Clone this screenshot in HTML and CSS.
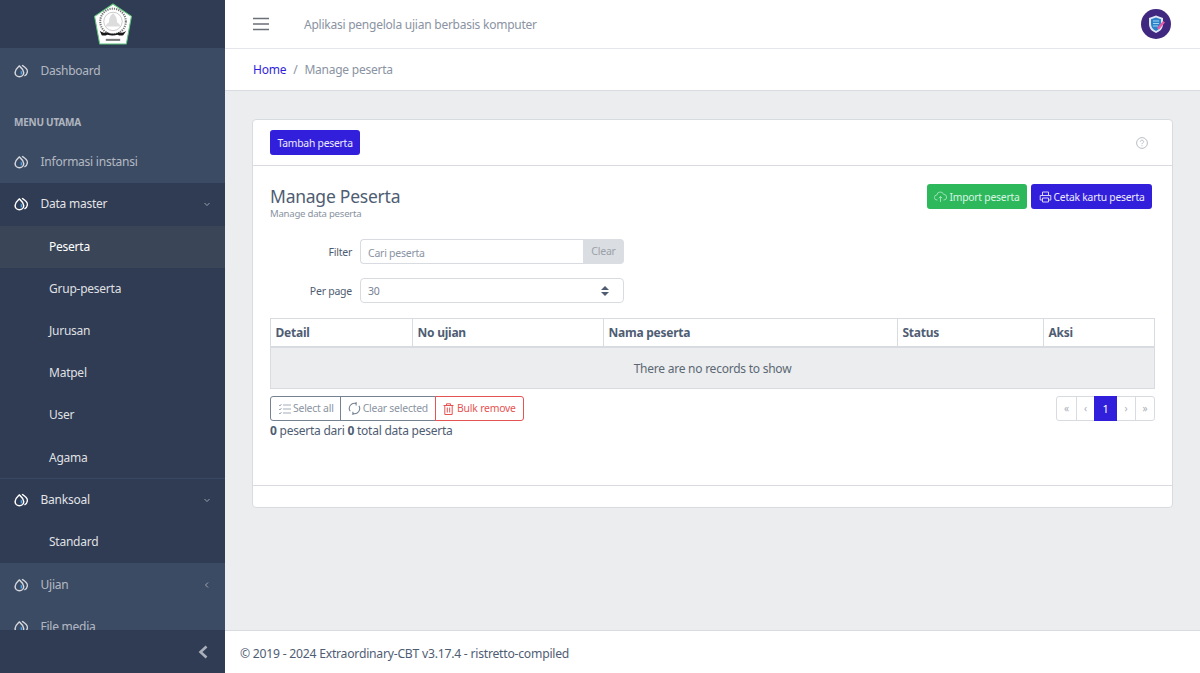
FILE: index.html
```html
<!DOCTYPE html>
<html lang="id">
<head>
<meta charset="utf-8">
<title>Manage peserta</title>
<link rel="stylesheet" href="styles.css">
</head>
<body>
<svg class="defs" width="0" height="0" aria-hidden="true">
  <symbol id="drop" viewBox="0 0 14 14">
    <path d="M8 1.200c2.400 1.700 5.400 3.300 5.400 6.100 0 2.200-1.200 3.800-3 4.500" fill="none" stroke="currentColor" stroke-width="1.300"/>
    <path d="M5.300 2C7 3.600 9.700 5.200 9.700 8.500a4.300 4.300 0 0 1-8.600 0C1.100 5.200 3.600 3.600 5.300 2Z" fill="none" stroke="currentColor" stroke-width="1.500"/>
    <path d="M6.700 6.200c.9.900 1.500 1.700 1.500 2.700 0 1-.7 1.700-1.500 1.700Z" fill="#4aa3ef"/>
  </symbol>
</svg>
<div class="app">
  <aside class="sidebar">
    <div class="brand">
      <svg class="logo" width="40" height="42" viewBox="1 0 38 41">
        <path d="M20 1 38 13 33 40 7 40 2 13Z" fill="#fff" stroke="#5cc47a" stroke-width="1" stroke-linejoin="round"/>
        <circle cx="20" cy="18" r="12.500" fill="none" stroke="#777" stroke-width="2" stroke-dasharray="1.200 1"/>
        <circle cx="20" cy="18" r="9" fill="none" stroke="#aaa" stroke-width=".6"/>
        <path d="M20 10c2.500 2 4 5 4 9 2 1 3 2 3 4H13c0-2 1-3 3-4 0-4 1.500-7 4-9Z" fill="#dcdcdc"/>
        <path d="M7 27c3 2 5 2.500 7 1.500 4 2 8 2 12 0 2 1 4 .5 7-1.500l-3 4.500c-2 .5-3.500.5-5.500-.5-3 1-7 1-10 0-2 1-3.500 1-5.500.500Z" fill="#1a1a1a"/>
        <rect x="13" y="35" width="14" height="2" fill="#777"/>
      </svg>
    </div>
    <nav class="nav">
      <a class="nav-link"><svg class="ico"><use href="#drop"/></svg>Dashboard</a>
      <div class="nav-title">MENU UTAMA</div>
      <a class="nav-link"><svg class="ico"><use href="#drop"/></svg>Informasi instansi</a>
      <div class="group">
        <a class="nav-link"><svg class="ico"><use href="#drop"/></svg>Data master<svg class="chev" viewBox="0 0 8 8"><path d="M1.500 3 4 5.500 6.500 3"/></svg></a>
        <a class="sub active">Peserta</a>
        <a class="sub">Grup-peserta</a>
        <a class="sub">Jurusan</a>
        <a class="sub">Matpel</a>
        <a class="sub">User</a>
        <a class="sub">Agama</a>
      </div>
      <div class="group sep">
        <a class="nav-link"><svg class="ico"><use href="#drop"/></svg>Banksoal<svg class="chev" viewBox="0 0 8 8"><path d="M1.500 3 4 5.500 6.500 3"/></svg></a>
        <a class="sub">Standard</a>
      </div>
      <a class="nav-link"><svg class="ico"><use href="#drop"/></svg>Ujian<svg class="chev" viewBox="0 0 8 8"><path d="M5 1.500 2.500 4 5 6.500"/></svg></a>
      <a class="nav-link"><svg class="ico"><use href="#drop"/></svg>File media</a>
    </nav>
    <div class="minimizer">
      <svg width="12" height="14" viewBox="0 0 12 14"><path d="M9.500 1.500 3.500 7l6 5.500" fill="none" stroke="#a9b0bb" stroke-width="2.600"/></svg>
    </div>
  </aside>
  <div class="wrapper">
    <header class="header">
      <div class="topbar">
        <svg class="burger" width="16" height="14" viewBox="0 0 16 14"><path d="M0 1.500h16M0 7h16M0 12.500h16" stroke="#6b7078" stroke-width="1.300"/></svg>
        <span class="tagline">Aplikasi pengelola ujian berbasis komputer</span>
        <svg class="avatar" width="30" height="30" viewBox="0 0 30 30">
          <circle cx="15" cy="15" r="15" fill="#40277f"/>
          <path d="M15 6.500 22 9v6c0 4.500-3 7.500-7 9-4-1.500-7-4.500-7-9V9Z" fill="#dfe6f3"/>
          <path d="M15 8.500 20 10.300V15c0 3.300-2 5.500-5 7-3-1.500-5-3.700-5-7v-4.700Z" fill="#2b82c9"/>
          <path d="M12 12h6M12 14.500h6M12 17h5" stroke="#9fd6f2" stroke-width="1"/>
          <path d="M16 19l6-7 2 1.500-6 7Z" fill="#e85aa5"/>
        </svg>
      </div>
      <div class="crumbs">
        <a class="crumb-link">Home</a><span class="crumb-sep">/</span><span class="crumb-now">Manage peserta</span>
      </div>
    </header>
    <main class="main">
      <section class="card">
        <div class="card-head">
          <button class="btn primary">Tambah peserta</button>
          <svg class="help" width="12" height="12" viewBox="0 0 12 12"><circle cx="6" cy="6" r="5.400" fill="none" stroke="#a7adb5" stroke-width=".8"/><path d="M4.400 4.700C4.400 3.700 5.100 3.200 6 3.200s1.600.6 1.600 1.400C7.600 5.800 6 5.800 6 7.200" fill="none" stroke="#a7adb5" stroke-width=".8"/><circle cx="6" cy="8.800" r=".5" fill="#a7adb5"/></svg>
        </div>
        <div class="card-body">
          <div class="title-row">
            <div>
              <h4 class="title">Manage Peserta</h4>
              <div class="subtitle">Manage data peserta</div>
            </div>
            <div class="actions">
              <button class="btn success"><svg width="13" height="12" viewBox="0 0 13 12"><path d="M3.500 9H3A2.500 2.500 0 0 1 2.800 4 3.500 3.500 0 0 1 9.600 3.400 2.800 2.800 0 0 1 10 9h-.5M6.500 11V5.500M4.800 7.200l1.700-1.700 1.700 1.700" fill="none" stroke="#a5e5bd" stroke-width=".9"/></svg>Import peserta</button>
              <button class="btn primary"><svg width="13" height="12" viewBox="0 0 13 12"><path d="M3.500 4V1h6v3M3 9H1.200V4.500h10.600V9H10M3.500 7h6v4h-6Z" fill="none" stroke="#d8d4fa" stroke-width="1"/></svg>Cetak kartu peserta</button>
            </div>
          </div>
          <div class="form-row first">
            <label class="label">Filter</label>
            <div class="input-group">
              <span class="input placeholder">Cari peserta</span>
              <span class="clear">Clear</span>
            </div>
          </div>
          <div class="form-row second">
            <label class="label">Per page</label>
            <div class="select">
              <span class="select-value">30</span>
              <svg width="8" height="10" viewBox="0 0 8 10"><path d="M4 0 8 4H0ZM4 10 0 6h8Z" fill="#4f5d73"/></svg>
            </div>
          </div>
          <table class="table">
            <thead>
              <tr><th class="c1">Detail</th><th class="c2">No ujian</th><th class="c3">Nama peserta</th><th class="c4">Status</th><th class="c5">Aksi</th></tr>
            </thead>
            <tbody>
              <tr><td colspan="5">There are no records to show</td></tr>
            </tbody>
          </table>
          <div class="tools">
            <div class="btn-group">
              <button class="tbtn dark"><svg width="13" height="12" viewBox="0 0 13 12"><path d="M5 2h8M5 6h8M5 10h8M1 2l1 1 1.500-2M1 6l1 1 1.500-2M1 10l1 1 1.500-2" fill="none" stroke="#9aa3b2" stroke-width=".9"/></svg>Select all</button>
              <button class="tbtn dark joined"><svg width="13" height="13" viewBox="0 0 12 12"><path d="M2 8.500A4.700 4.700 0 0 1 7.500 1.500M10 3.500A4.700 4.700 0 0 1 4.500 10.500M7.500 0v3.200M4.500 9v3" fill="none" stroke="#768192" stroke-width="1"/></svg>Clear selected</button>
              <button class="tbtn danger joined"><svg width="11" height="12" viewBox="0 0 11 12"><path d="M.5 2.500h10M3.500 2.500V.8h4v1.700M1.800 2.500v9h7.400v-9M4.300 4.500v5M6.700 4.500v5" fill="none" stroke="#e55353" stroke-width="1"/></svg>Bulk remove</button>
            </div>
            <ul class="pager">
              <li class="pg-first">«</li><li class="pg-prev">‹</li><li class="current">1</li><li class="pg-next">›</li><li class="pg-last">»</li>
            </ul>
          </div>
          <p class="summary"><b>0</b> peserta dari <b>0</b> total data peserta</p>
        </div>
        <div class="card-foot"></div>
      </section>
    </main>
    <footer class="footer">© 2019 - 2024 Extraordinary-CBT v3.17.4 - ristretto-compiled</footer>
  </div>
</div>
</body>
</html>
```

FILE: styles.css
```css
* { box-sizing: border-box; }
html, body { margin: 0; height: 100%; overflow: hidden; }
body { font-family: "Noto Sans", "Open Sans", sans-serif; font-size: 12px; letter-spacing: -.02em; line-height: 1.5; color: #4f5d73; background: #ebedef; }
.defs { position: absolute; }
.app { display: flex; height: 673px; }

.sidebar { width: 225px; flex: none; display: flex; flex-direction: column; background: #3c4b64; color: rgba(255,255,255,.8); }
.brand { height: 48px; flex: none; background: #303c54; display: flex; align-items: center; justify-content: center; }
.nav { flex: 1; min-height: 0; overflow: hidden; padding-top: 2px; }
.nav-link { display: flex; align-items: center; height: 42.200px; padding: 0 14px; color: rgba(255,255,255,.62); }
.ico { width: 14px; height: 14px; margin-right: 12.500px; color: rgba(255,255,255,.78); flex: none; }
.chev { width: 8px; height: 8px; margin-left: auto; margin-right: 0; fill: none; stroke: rgba(255,255,255,.5); stroke-width: 1; }
.nav-title { height: 49px; padding: 20px 14px 0; font-size: 10px; font-weight: 700; line-height: 20px; color: rgba(255,255,255,.6); }
.group { background: #303c54; }
.group .nav-link { color: rgba(255,255,255,.88); }
.group .ico { color: #fff; }
.sep { border-top: 1px solid #3a4760; margin-top: -.6px; }
.sub { display: block; height: 42.200px; padding: 0 49px; line-height: 42px; color: rgba(255,255,255,.86); }
.sub.active { background: #3a4658; color: #fff; }
.minimizer { height: 43px; flex: none; background: #303c54; display: flex; align-items: center; justify-content: flex-end; padding-right: 16px; }

.wrapper { flex: 1; min-width: 0; display: flex; flex-direction: column; }
.header { background: #fff; border-bottom: 1px solid #d8dbe0; }
.topbar { height: 49px; display: flex; align-items: center; padding: 0 29px 0 28px; border-bottom: 1px solid #e4e6eb; }
.burger { flex: none; }
.tagline { margin-left: 35px; margin-top: 2px; color: #8a93a2; }
.avatar { margin-left: auto; }
.crumbs { height: 41px; display: flex; align-items: center; padding-left: 28px; }
.crumb-link { color: #321fdb; }
.crumb-sep { margin: 0 7px; color: #8a93a2; }
.crumb-now { color: #8a93a2; }

.main { flex: 1; min-height: 0; padding: 28px 27px 0; }
.card { background: #fff; border: 1px solid #d8dbe0; border-radius: 4px; height: 389px; display: flex; flex-direction: column; }
.card-head { height: 46px; flex: none; border-bottom: 1px solid #d8dbe0; padding: 0 24px 0 17px; display: flex; align-items: center; justify-content: space-between; }
.card-body { flex: 1; min-height: 0; padding: 16px 17px 0 17px; }
.card-foot { height: 22px; flex: none; border-top: 1px solid #d8dbe0; }

.btn { height: 25px; padding: 1px 7.500px 0; border: 0; border-radius: 3px; font: inherit; font-size: 10.300px; letter-spacing: -.02em; line-height: 24px; color: #fff; display: inline-flex; align-items: center; gap: 2px; white-space: nowrap; }
.btn svg { flex: none; }
.primary { background: #321fdb; color: #eeebff; }
.success { background: #2eb85c; color: #d9f5e3; }
.help { flex: none; }

.title-row { display: flex; justify-content: space-between; align-items: flex-start; }
.title { margin: 0; font-size: 17.500px; font-weight: 400; line-height: 28px; color: #4f5d73; }
.subtitle { font-size: 9.600px; line-height: 10px; margin-top: -1px; color: #8a93a2; }
.actions { display: flex; gap: 4px; padding: 2px 3px 0 0; }

.form-row { display: flex; align-items: center; height: 25px; }
.form-row.first { margin-top: 20px; }
.form-row.second { margin-top: 14px; }
.label { width: 82px; text-align: right; padding-top: 3px; font-size: 10.500px; margin-right: 8px; color: #4f5d73; }
.input-group { width: 264px; height: 25px; display: flex; }
.input { flex: 1; border: 1px solid #d8dbe0; border-right: 0; border-radius: 4px 0 0 4px; padding: 2px 7px 0; font-size: 10.500px; line-height: 23px; }
.placeholder { color: #8a93a2; }
.clear { width: 41px; background: #dadde1; border-radius: 0 4px 4px 0; font-size: 10.500px; line-height: 25px; text-align: center; color: #9aa1ab; }
.select { width: 264px; height: 25px; border: 1px solid #d8dbe0; border-radius: 4px; padding: 0 14px 0 7px; font-size: 10.500px; display: flex; align-items: center; justify-content: space-between; color: #768192; }
.select-value { padding-top: 2px; }

.table { width: 885px; margin-top: 15px; border-collapse: collapse; table-layout: fixed; }
.table th { height: 28px; padding: 1px 4.500px 0; border: 1px solid #d8dbe0; border-bottom-width: 2px; text-align: left; font-size: 12px; font-weight: 700; color: #4f5d73; }
.table td { height: 42px; padding-top: 3px; border: 1px solid #d8dbe0; background: #ebedef; text-align: center; font-size: 12px; color: #5c6873; }
.c1 { width: 142px; }
.c2 { width: 191px; }
.c3 { width: 294px; }
.c4 { width: 146px; }

.tools { display: flex; justify-content: space-between; align-items: center; margin-top: 7px; }
.btn-group { display: flex; }
.tbtn { height: 25px; padding: 0 7px; border: 1px solid #768192; background: #fff; font: inherit; font-size: 10.400px; letter-spacing: -.02em; color: #8a93a2; display: inline-flex; align-items: center; gap: 2px; white-space: nowrap; }
.tbtn:first-child { border-radius: 3px 0 0 3px; padding-right: 6px; }
.tbtn:last-child { border-radius: 0 3px 3px 0; }
.tbtn.joined { margin-left: -1px; }
.danger { border-color: #e55353; color: #e55353; position: relative; gap: 3px; }
.pager { margin: 0; padding: 0; list-style: none; display: flex; height: 25px; }
.pager li { margin-left: -1px; border: 1px solid #d8dbe0; font-size: 10px; line-height: 23px; text-align: center; color: #aab0b9; }
.pager .pg-first { width: 21px; margin-left: 0; border-radius: 3px 0 0 3px; }
.pager .pg-prev { width: 19px; }
.pager .pg-next { width: 20px; }
.pager .pg-last { width: 20px; border-radius: 0 3px 3px 0; }
.pager .current { width: 23px; background: #321fdb; border-color: #321fdb; color: #fff; font-size: 11px; position: relative; }
.summary { margin: 1px 0 0; font-size: 12px; line-height: 18px; color: #4f5d73; }

.footer { height: 43px; flex: none; background: #fff; border-top: 1px solid #d8dbe0; padding-left: 15px; line-height: 45px; font-size: 12.200px; color: #4f5d73; }
```
